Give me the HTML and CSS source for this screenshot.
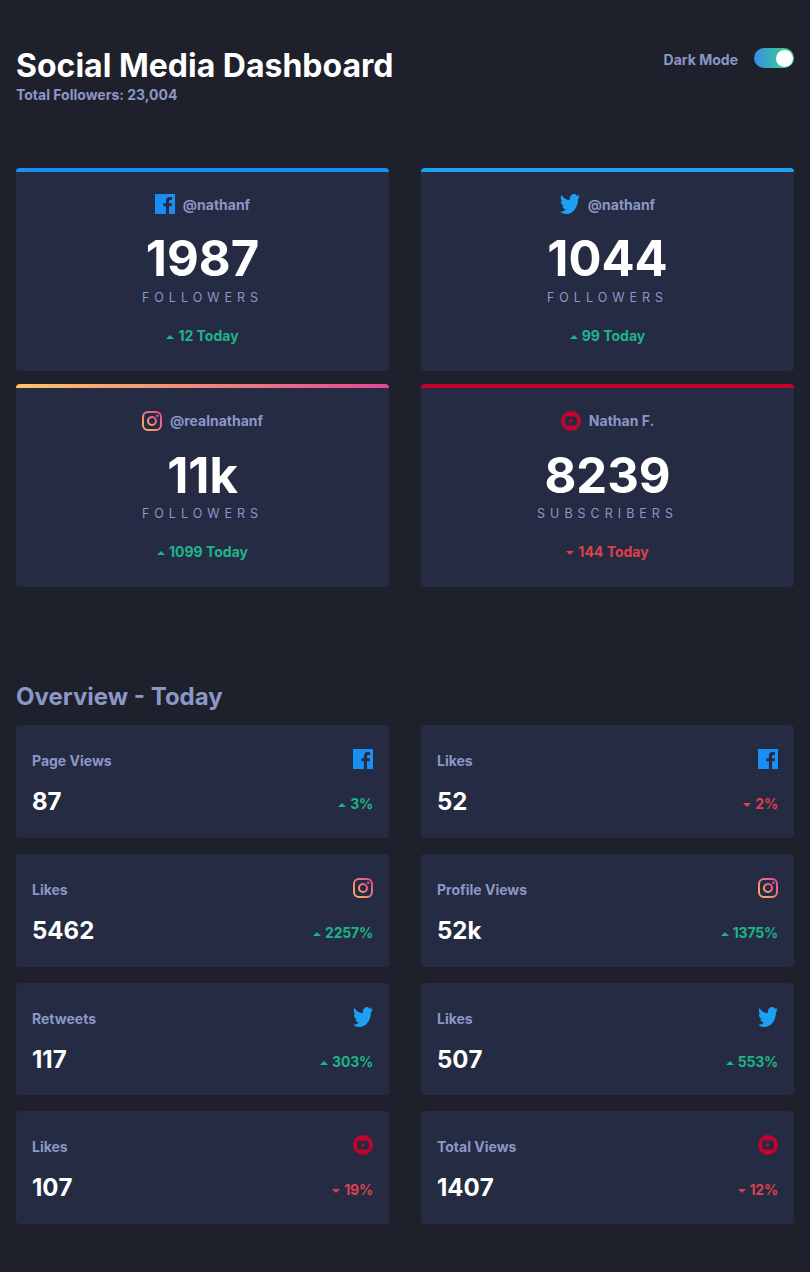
FILE: index.html
```html
<!DOCTYPE html>
<html lang="en">
<head>
    <meta charset="UTF-8">
    <meta name="viewport" content="width=device-width, initial-scale=1.0">
    <title>Social Media Dashboard</title>
    <link rel="stylesheet" href="styles.css">
</head>
<body>

<!-- Icons -->
<svg class="icon-defs" width="0" height="0" aria-hidden="true">
    <defs>
        <linearGradient id="igGradient" x1="0" y1="1" x2="1" y2="0">
            <stop offset="0" stop-color="#fcae64"/>
            <stop offset="1" stop-color="#df4996"/>
        </linearGradient>
        <symbol id="iconFacebook" viewBox="0 0 20 20">
            <path fill="#178fF5" d="M0 0h20v20H0z"/>
            <path fill="#252b43" d="M14 20v-7.7h2.6l.4-3h-3V7.4c0-.9.3-1.5 1.5-1.5H17V3.2c-.3 0-1.2-.1-2.3-.1-2.3 0-3.8 1.4-3.8 3.9v2.3H8.300v3h2.600V20z"/>
        </symbol>
        <symbol id="iconTwitter" viewBox="0 2.200 24 19.600" preserveAspectRatio="none">
            <path fill="#1da1f2" d="M23.950 4.570a10 10 0 0 1-2.820.77 4.960 4.960 0 0 0 2.160-2.720c-.95.550-2 .96-3.130 1.190a4.920 4.920 0 0 0-8.380 4.480C7.690 8.100 4.070 6.130 1.640 3.160a4.820 4.820 0 0 0-.67 2.470c0 1.710.87 3.210 2.190 4.100a4.900 4.900 0 0 1-2.230-.62v.060a4.920 4.920 0 0 0 3.950 4.830 5 5 0 0 1-2.210.08 4.940 4.940 0 0 0 4.600 3.420A9.870 9.870 0 0 1 0 19.540a14 14 0 0 0 7.560 2.210c9.050 0 14-7.500 14-13.980 0-.21 0-.42-.02-.63a9.940 9.940 0 0 0 2.460-2.550z"/>
        </symbol>
        <symbol id="iconInstagram" viewBox="0 0 20 20">
            <rect x="1" y="1" width="18" height="18" rx="5" fill="none" stroke="url(#igGradient)" stroke-width="2"/>
            <circle cx="10" cy="10" r="4" fill="none" stroke="url(#igGradient)" stroke-width="2"/>
            <circle cx="15.300" cy="4.700" r="1.200" fill="#e6578a"/>
        </symbol>
        <symbol id="iconYoutube" viewBox="0 0 20 20">
            <circle cx="10" cy="10" r="10" fill="#c4032b"/>
            <rect x="4" y="5.500" width="12" height="9" rx="2.500" fill="#252b43"/>
            <path fill="#c4032b" d="M8.500 7.700v4.600l3.800-2.300z"/>
        </symbol>
    </defs>
</svg>

<!-- Header -->
<header class="page-header">
    <div>
        <h1 class="page-title">Social Media Dashboard</h1>
        <p class="page-subtitle">Total Followers: 23,004</p>
    </div>
    <div class="mode-toggle">
        <span class="mode-label">Dark Mode</span>
        <span class="switch"><span class="switch-knob"></span></span>
    </div>
</header>

<!-- Followers -->
<section class="follower-grid">
    <div class="follower-card top-facebook">
        <div class="handle"><svg class="icon"><use href="#iconFacebook"/></svg>@nathanf</div>
        <div class="follower-count">1987</div>
        <div class="follower-label">FOLLOWERS</div>
        <div class="today up"><span class="arrow"></span>12 Today</div>
    </div>
    <div class="follower-card top-twitter">
        <div class="handle"><svg class="icon"><use href="#iconTwitter"/></svg>@nathanf</div>
        <div class="follower-count">1044</div>
        <div class="follower-label">FOLLOWERS</div>
        <div class="today up"><span class="arrow"></span>99 Today</div>
    </div>
    <div class="follower-card top-instagram">
        <div class="handle"><svg class="icon"><use href="#iconInstagram"/></svg>@realnathanf</div>
        <div class="follower-count">11k</div>
        <div class="follower-label">FOLLOWERS</div>
        <div class="today up"><span class="arrow"></span>1099 Today</div>
    </div>
    <div class="follower-card top-youtube">
        <div class="handle"><svg class="icon"><use href="#iconYoutube"/></svg>Nathan F.</div>
        <div class="follower-count">8239</div>
        <div class="follower-label">SUBSCRIBERS</div>
        <div class="today down"><span class="arrow"></span>144 Today</div>
    </div>
</section>

<!-- Overview -->
<h2 class="overview-title">Overview - Today</h2>
<section class="overview-grid">
    <div class="stat-card">
        <div class="stat-row"><span class="stat-name">Page Views</span><svg class="icon"><use href="#iconFacebook"/></svg></div>
        <div class="stat-row stat-bottom"><span class="stat-value">87</span><span class="change up"><span class="arrow"></span>3%</span></div>
    </div>
    <div class="stat-card">
        <div class="stat-row"><span class="stat-name">Likes</span><svg class="icon"><use href="#iconFacebook"/></svg></div>
        <div class="stat-row stat-bottom"><span class="stat-value">52</span><span class="change down"><span class="arrow"></span>2%</span></div>
    </div>
    <div class="stat-card">
        <div class="stat-row"><span class="stat-name">Likes</span><svg class="icon"><use href="#iconInstagram"/></svg></div>
        <div class="stat-row stat-bottom"><span class="stat-value">5462</span><span class="change up"><span class="arrow"></span>2257%</span></div>
    </div>
    <div class="stat-card">
        <div class="stat-row"><span class="stat-name">Profile Views</span><svg class="icon"><use href="#iconInstagram"/></svg></div>
        <div class="stat-row stat-bottom"><span class="stat-value">52k</span><span class="change up"><span class="arrow"></span>1375%</span></div>
    </div>
    <div class="stat-card">
        <div class="stat-row"><span class="stat-name">Retweets</span><svg class="icon"><use href="#iconTwitter"/></svg></div>
        <div class="stat-row stat-bottom"><span class="stat-value">117</span><span class="change up"><span class="arrow"></span>303%</span></div>
    </div>
    <div class="stat-card">
        <div class="stat-row"><span class="stat-name">Likes</span><svg class="icon"><use href="#iconTwitter"/></svg></div>
        <div class="stat-row stat-bottom"><span class="stat-value">507</span><span class="change up"><span class="arrow"></span>553%</span></div>
    </div>
    <div class="stat-card">
        <div class="stat-row"><span class="stat-name">Likes</span><svg class="icon"><use href="#iconYoutube"/></svg></div>
        <div class="stat-row stat-bottom"><span class="stat-value">107</span><span class="change down"><span class="arrow"></span>19%</span></div>
    </div>
    <div class="stat-card">
        <div class="stat-row"><span class="stat-name">Total Views</span><svg class="icon"><use href="#iconYoutube"/></svg></div>
        <div class="stat-row stat-bottom"><span class="stat-value">1407</span><span class="change down"><span class="arrow"></span>12%</span></div>
    </div>
</section>

</body>
</html>
```

FILE: styles.css
```css
/* Page */
* {
    box-sizing: border-box;
}

body {
    margin: 0;
    padding: 48px 16px 47px;
    background-color: #1e202c;
    color: #8b97c6;
    font-family: Inter, "Liberation Sans", sans-serif;
}

.icon-defs {
    position: absolute;
}

.icon {
    display: block;
    flex: none;
    width: 20px;
    height: 20px;
}

/* Header */
.page-header {
    display: flex;
    justify-content: space-between;
    align-items: flex-start;
}

.page-title {
    margin: 0;
    color: #ffffff;
    font-size: 32px;
    font-weight: 700;
    line-height: 36px;
}

.page-subtitle {
    margin: 0;
    font-size: 14px;
    font-weight: 700;
    line-height: 21px;
}

.mode-toggle {
    display: flex;
    align-items: flex-start;
    gap: 16px;
}

.mode-label {
    font-size: 14px;
    font-weight: 700;
    line-height: 24px;
}

.switch {
    display: block;
    width: 40px;
    height: 20px;
    border-radius: 10px;
    padding: 1.5px 1px;
    background: linear-gradient(90deg, #378fe6, #3eda82);
}

.switch-knob {
    display: block;
    width: 17px;
    height: 17px;
    margin-left: 21px;
    border-radius: 50%;
    background-color: #ffffff;
}

/* Follower cards */
.follower-grid {
    display: grid;
    grid-template-columns: 1fr 1fr;
    gap: 13.8px 32px;
    margin-top: 63px;
}

.follower-card {
    position: relative;
    height: 202.6px;
    padding-top: 26.2px;
    overflow: hidden;
    border-radius: 4px;
    background-color: #252b43;
    text-align: center;
}

.follower-card::before {
    content: "";
    position: absolute;
    top: 0;
    left: 0;
    right: 0;
    height: 4px;
}

.top-facebook::before {
    background-color: #178ff5;
}

.top-twitter::before {
    background-color: #1da1f2;
}

.top-instagram::before {
    background: linear-gradient(90deg, #fdc468, #df4996);
}

.top-youtube::before {
    background-color: #c4032b;
}

.handle {
    display: flex;
    justify-content: center;
    align-items: center;
    gap: 8px;
    height: 20px;
    font-size: 14px;
    font-weight: 700;
}

.follower-count {
    margin-top: 16px;
    color: #ffffff;
    font-size: 49px;
    font-weight: 700;
    font-kerning: none;
    line-height: 58px;
}

.follower-label {
    margin-top: 1.4px;
    font-size: 12.5px;
    font-weight: 400;
    letter-spacing: 5px;
    line-height: 15px;
}

.today {
    margin-top: 22.3px;
    font-size: 14px;
    font-weight: 700;
    line-height: 17px;
}

/* Up and down colours */
.up {
    color: #1db489;
}

.down {
    color: #dc414c;
}

.arrow {
    display: inline-block;
    width: 0;
    height: 0;
    margin-right: 4px;
    vertical-align: 2px;
    border-left: 4px solid transparent;
    border-right: 4px solid transparent;
}

.up .arrow {
    border-bottom: 4px solid #1db489;
}

.down .arrow {
    border-top: 4px solid #dc414c;
}

/* Overview */
.overview-title {
    margin: 95px 0 14px;
    font-size: 24px;
    font-weight: 700;
    line-height: 29px;
}

.overview-grid {
    display: grid;
    grid-template-columns: 1fr 1fr;
    gap: 16px 32px;
}

.stat-card {
    height: 112.8px;
    padding: 24px 16px 0;
    border-radius: 4px;
    background-color: #252b43;
}

.stat-row {
    display: flex;
    justify-content: space-between;
    align-items: flex-start;
}

.stat-bottom {
    align-items: center;
    margin-top: 16px;
}

.stat-name {
    margin-top: 2px;
    font-size: 14px;
    font-weight: 700;
    line-height: 20px;
}

.stat-value {
    color: #ffffff;
    font-size: 24px;
    font-weight: 700;
    font-kerning: none;
    line-height: 29px;
}

.change {
    padding-top: 4px;
    font-size: 14px;
    font-weight: 700;
    letter-spacing: -0.2px;
}
```
